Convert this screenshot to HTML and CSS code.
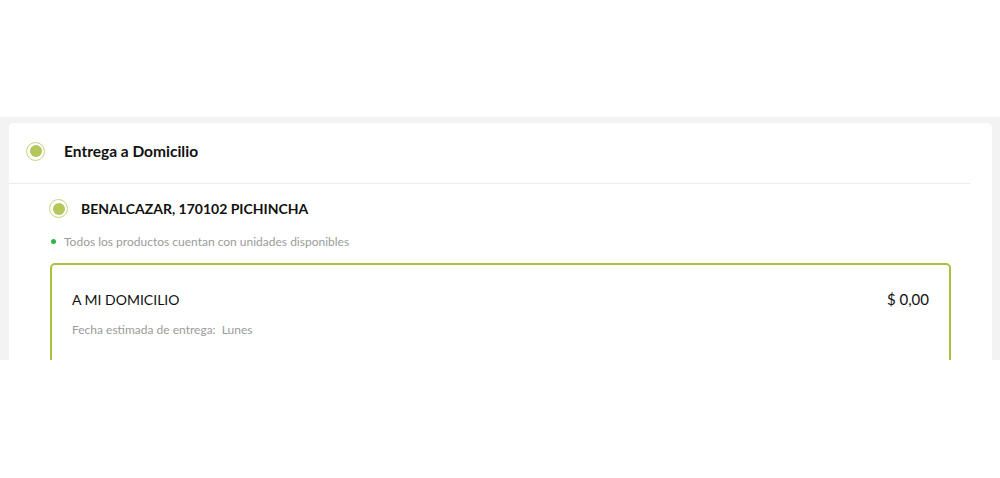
FILE: index.html
```html
<!DOCTYPE html>
<html lang="es">
<head>
    <meta charset="UTF-8">
    <meta name="viewport" content="width=device-width, initial-scale=1.0">
    <title>Entrega a Domicilio</title>
    <link rel="stylesheet" href="styles.css">
</head>
<body>
    <div class="band">
        <div class="card">
            <div class="card-header">
                <span class="radio"></span>
                <h2>Entrega a Domicilio</h2>
            </div>
            <div class="card-body">
                <div class="address">
                    <span class="radio"></span>
                    <h3>BENALCAZAR, 170102 PICHINCHA</h3>
                </div>
                <p class="stock"><span class="dot"></span>Todos los productos cuentan con unidades disponibles</p>
                <div class="option">
                    <div class="option-top">
                        <span class="option-name">A MI DOMICILIO</span>
                        <span class="option-price">$ 0,00</span>
                    </div>
                    <p class="option-date">Fecha estimada de entrega:&nbsp; Lunes</p>
                </div>
            </div>
        </div>
    </div>
</body>
</html>
```

FILE: styles.css
```css
body {
    font-family: Lato, "Open Sans", sans-serif;
    background-color: #fff;
    color: #111;
    margin: 0;
    padding: 0;
}
.band {
    margin-top: 117px;
    height: 237px;
    padding: 6px 8px 0 9px;
    background-color: #f3f3f3;
    overflow: hidden;
}
.card {
    background-color: #fff;
    border-radius: 5px;
    height: 300px;
}
.card-header {
    display: flex;
    align-items: center;
    gap: 19px;
    height: 56px;
    padding: 0 0 4px 17px;
    margin-right: 22px;
    border-bottom: 1px solid #ececec;
}
h2 {
    margin: 0;
    font-size: 15.5px;
    font-weight: 700;
}
.radio {
    width: 17px;
    height: 17px;
    border: 1.5px solid #c4d47e;
    border-radius: 50%;
    display: flex;
    align-items: center;
    justify-content: center;
    flex-shrink: 0;
}
.radio::after {
    content: "";
    width: 12px;
    height: 12px;
    border-radius: 50%;
    background-color: #b3c75a;
}
.card-body {
    padding: 15px 41px 0 40px;
}
.address {
    display: flex;
    align-items: center;
    gap: 13px;
}
h3 {
    margin: 0;
    font-size: 14px;
    font-weight: 700;
}
.stock {
    display: flex;
    align-items: center;
    gap: 8px;
    margin: 16px 0 0 2px;
    font-size: 12px;
    color: #9b9b9b;
}
.dot {
    width: 5px;
    height: 5px;
    border-radius: 50%;
    background-color: #2fb44a;
}
.option {
    margin: 14px 0 0 1px;
    padding: 25px 20px 0 20px;
    height: 120px;
    border: 2px solid #aac33f;
    border-radius: 5px;
}
.option-top {
    display: flex;
    justify-content: space-between;
    align-items: center;
}
.option-name {
    font-size: 14px;
}
.option-price {
    font-size: 15px;
}
.option-date {
    margin: 14px 0 0;
    font-size: 12px;
    color: #9b9b9b;
}
```
